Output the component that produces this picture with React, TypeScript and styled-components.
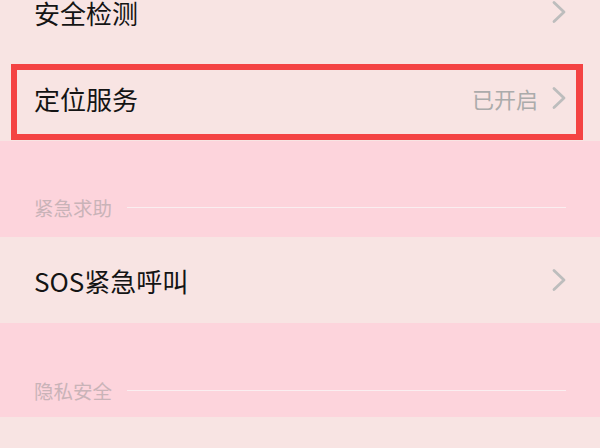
import styled, { createGlobalStyle } from 'styled-components';

const GlobalStyle = createGlobalStyle`
  html, body {
    margin: 0;
    padding: 0;
    width: 600px;
    height: 448px;
    overflow: hidden;
    background: #f8e4e3;
    font-family: "Noto Sans CJK SC", "Noto Sans", sans-serif;
  }
`;

const Page = styled.div`
  width: 600px;
  display: flex;
  flex-direction: column;
  margin-top: -31px;
`;

const Row = styled.div`
  position: relative;
  height: 86px;
  display: flex;
  align-items: center;
  padding: 0 34px;
  background: #f8e4e3;
`;

const Label = styled.span`
  flex: 1;
  font-size: 26px;
  color: #141414;
`;

const Value = styled.span`
  font-size: 22px;
  color: #ababab;
  margin-right: 14px;
`;

const Chevron = styled.svg`
  width: 14px;
  height: 24px;
  margin-right: 0;
`;

const Section = styled.div<{ $height: number }>`
  height: ${(p) => p.$height}px;
  background: #fdd4dc;
  display: flex;
  align-items: flex-end;
  padding: 0 34px;
  box-sizing: border-box;
`;

const SectionHead = styled.div<{ $pad: number }>`
  flex: 1;
  display: flex;
  align-items: center;
  gap: 15px;
  height: ${(p) => p.$pad * 2}px;
`;

const SectionTitle = styled.span`
  font-size: 19.5px;
  color: #c9b3b8;
`;

const Rule = styled.div`
  flex: 1;
  height: 1.5px;
  margin-top: 1px;
  background: #faeef0;
`;

const Highlight = styled.div`
  position: absolute;
  left: 11px;
  right: 17px;
  top: 9px;
  bottom: 1px;
  border: 6px solid #f44343;
  border-right-width: 7px;
  pointer-events: none;
`;

const Arrow = () => (
  <Chevron viewBox="0 0 14 24">
    <path d="M2 2.5 L12 12 L2 21.5" fill="none" stroke="#bdbdbd" strokeWidth="2.8" strokeLinecap="round" strokeLinejoin="round" />
  </Chevron>
);

const App = () => (
  <>
    <GlobalStyle />
    <Page>
      <Row>
        <Label>安全检测</Label>
        <Arrow />
      </Row>
      <Row>
        <Label>定位服务</Label>
        <Value>已开启</Value>
        <Arrow />
        <Highlight />
      </Row>
      <Section $height={96}>
        <SectionHead $pad={30}>
          <SectionTitle>紧急求助</SectionTitle>
          <Rule />
        </SectionHead>
      </Section>
      <Row>
        <Label>SOS紧急呼叫</Label>
        <Arrow />
      </Row>
      <Section $height={94}>
        <SectionHead $pad={27}>
          <SectionTitle>隐私安全</SectionTitle>
          <Rule />
        </SectionHead>
      </Section>
      <Row />
    </Page>
  </>
);

export default App;
